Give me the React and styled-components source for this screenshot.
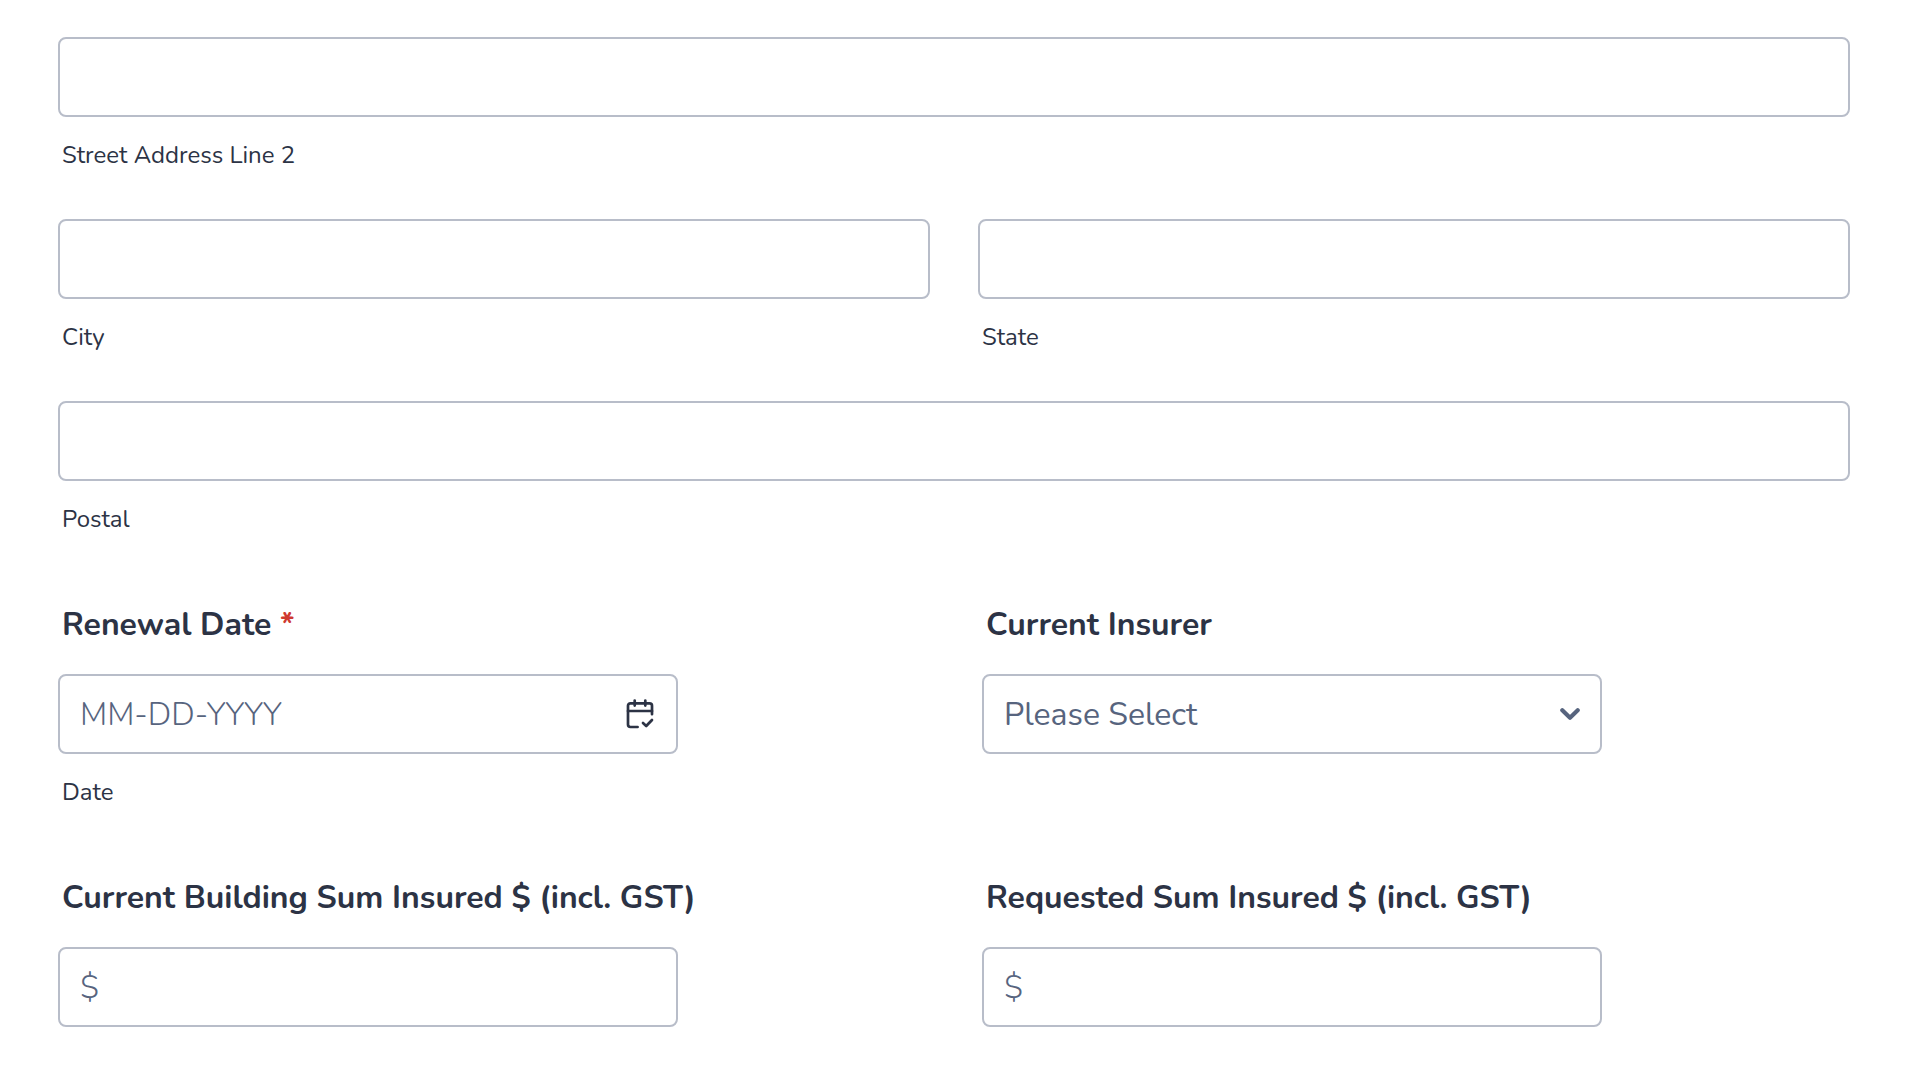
import React from "react";
import styled, { createGlobalStyle } from "styled-components";

const GlobalStyle = createGlobalStyle`
  *, *::before, *::after { box-sizing: border-box; }
  body {
    margin: 0;
    background: #fff;
    color: #2c3345;
    font-family: Nunito, Lato, "Open Sans", sans-serif;
    overflow: hidden;
  }
`;

const Form = styled.form`
  display: flex;
  flex-direction: column;
  padding: 37px 62px 0 58px;
`;

const AddressBlock = styled.div`
  display: grid;
  grid-template-columns: 1fr 1fr;
  column-gap: 48px;
  row-gap: 49px;
`;

const QuestionRow = styled.div`
  display: grid;
  grid-template-columns: 620px 620px;
  column-gap: 304px;
  margin-top: 71px;
`;

const Field = styled.div`
  display: flex;
  flex-direction: column;
  min-width: 0;
  grid-column: ${(p) => (p.$wide ? "1 / -1" : "auto")};
`;

const Label = styled.label`
  padding-left: 4px;
  margin-bottom: 29px;
  font-size: 32px;
  font-weight: 700;
  line-height: 40px;
  white-space: nowrap;
`;

const Required = styled.span`
  color: #cf3a30;
`;

const SubLabel = styled.label`
  padding-left: 4px;
  margin-top: 23px;
  font-size: 24px;
  line-height: 30px;
  white-space: nowrap;
`;

const Control = styled.div`
  display: flex;
  align-items: center;
  height: 80px;
  border: 2px solid #b8bdc9;
  border-radius: 8px;
  background: #fff;
`;

const Input = styled.input`
  flex: 1;
  min-width: 0;
  height: 100%;
  padding: 0 20px;
  border: 0;
  outline: 0;
  background: transparent;
  color: #2c3345;
  font: 300 32px Nunito, Lato, "Open Sans", sans-serif;
  &::placeholder { color: #57647e; opacity: 1; }
`;

const SelectValue = styled.span`
  flex: 1;
  padding: 2px 20px 0;
  color: #57647e;
  font-size: 32px;
  line-height: 40px;
`;

const CalendarIcon = styled.svg`
  flex: none;
  width: 28px;
  height: 30px;
  margin-right: 22px;
  fill: none;
  stroke: #2c3345;
  stroke-width: 2.7;
  stroke-linecap: round;
  stroke-linejoin: round;
`;

const ChevronIcon = styled.svg`
  flex: none;
  width: 20px;
  height: 12px;
  margin-right: 20px;
  fill: none;
  stroke: #57647e;
  stroke-width: 4.2;
  stroke-linecap: round;
  stroke-linejoin: round;
`;

function TextField({ sub, wide }) {
  return (
    <Field $wide={wide}>
      <Control><Input aria-label={sub} /></Control>
      <SubLabel>{sub}</SubLabel>
    </Field>
  );
}

function MoneyField({ label }) {
  return (
    <Field>
      <Label>{label}</Label>
      <Control><Input placeholder="$" /></Control>
    </Field>
  );
}

export default function App() {
  return (
    <>
      <GlobalStyle />
      <Form>
        <AddressBlock>
          <TextField wide sub="Street Address Line 2" />
          <TextField sub="City" />
          <TextField sub="State" />
          <TextField wide sub="Postal" />
        </AddressBlock>
        <QuestionRow>
          <Field>
            <Label>
              Renewal Date <Required>*</Required>
            </Label>
            <Control>
              <Input placeholder="MM-DD-YYYY" />
              <CalendarIcon viewBox="0 0 28 30">
                <path d="M11.6 28H4.4A2.4 2.4 0 0 1 2 25.6V6.7a2.4 2.4 0 0 1 2.4-2.4h19.2A2.4 2.4 0 0 1 26 6.7v8.5" />
                <path d="M2 12h24M8.7 1.6v5M19.3 1.6v5M17 24l3.2 3 5.8-6" />
              </CalendarIcon>
            </Control>
            <SubLabel>Date</SubLabel>
          </Field>
          <Field>
            <Label>Current Insurer</Label>
            <Control>
              <SelectValue>Please Select</SelectValue>
              <ChevronIcon viewBox="0 0 20 12">
                <path d="M2.3 2.3 10 9.7l7.7-7.4" />
              </ChevronIcon>
            </Control>
          </Field>
        </QuestionRow>
        <QuestionRow>
          <MoneyField label="Current Building Sum Insured $ (incl. GST)" />
          <MoneyField label="Requested Sum Insured $ (incl. GST)" />
        </QuestionRow>
      </Form>
    </>
  );
}
